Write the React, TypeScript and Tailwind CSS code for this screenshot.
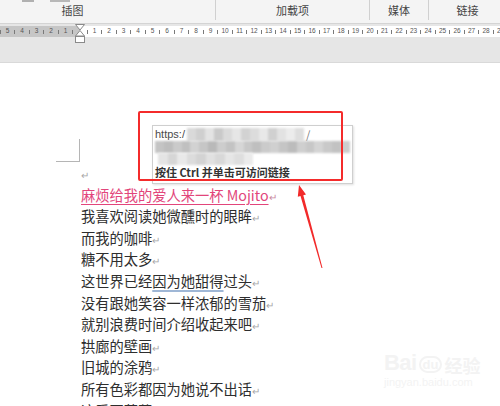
import React from 'react';

const cjk = "font-['Noto_Sans_CJK_SC','Noto_Sans',sans-serif]";

const lines = [
  '我喜欢阅读她微醺时的眼眸',
  '而我的咖啡',
  '糖不用太多',
  'UNDERLINE',
  '没有跟她笑容一样浓郁的雪茄',
  '就别浪费时间介绍收起来吧',
  '拱廊的壁画',
  '旧城的涂鸦',
  '所有色彩都因为她说不出话',
  '这爱不落幕',
];

// ruler cells: k = -11 .. 58, centred at 80 + 7.25k
const ruler = Array.from({ length: 70 }, (_, i) => i - 11);

const mosaic1 = ['#d9d9d9', '#cfcfcf', '#e3e3e3', '#c9c9c9', '#dadada', '#e6e6e6', '#d2d2d2', '#dcdcdc', '#e8e8e8', '#d0d0d0', '#e2e2e2', '#ececec', '#dedede'];
const mosaic2 = ['#c4c4c4', '#bdbdbd', '#cacaca', '#c0c0c0', '#d2d2d2', '#c6c6c6', '#b9b9b9', '#cdcdcd', '#c3c3c3', '#d6d6d6', '#c8c8c8', '#bfbfbf', '#cbcbcb', '#d0d0d0', '#c5c5c5', '#bcbcbc', '#cfcfcf', '#c7c7c7', '#d4d4d4', '#c9c9c9', '#c2c2c2', '#cccccc'];
const mosaic3 = ['#e4e4e4', '#d6d6d6', '#e9e9e9', '#dcdcdc', '#d3d3d3', '#e1e1e1', '#d8d8d8', '#e6e6e6', '#dedede', '#ebebeb'];

function Ret({ pink }: { pink?: boolean }) {
  return <span className={`text-[10px] leading-none ${pink ? 'text-[#c98a9e]' : 'text-[#a8a8a8]'}`}>↵</span>;
}

export default function App() {
  return (
    <div className={`relative w-[500px] h-[406px] overflow-hidden bg-white ${cjk}`}>
      {/* Ribbon */}
      <div className="relative h-[24px] bg-[#f4f4f4] border-b border-[#d4d4d4] overflow-hidden">
        <div className="flex gap-[16px] pl-[22px] h-[3px]">
          <div className="w-[12px] h-[2px] bg-[#b0b0b0]" />
          <div className="w-[20px] h-[2px] bg-[#b8b8b8]" />
        </div>
        <div className="flex ml-[-70px] h-[20px] mt-[-3px]">
          <div className="w-[285px] shrink-0 flex items-end justify-center text-[11px] text-[#444] leading-none pb-[4px]">插图</div>
          <div className="w-px bg-[#d0d0d0] shrink-0" />
          <div className="w-[153px] shrink-0 flex items-end justify-center text-[11px] text-[#444] leading-none pb-[4px]">加载项</div>
          <div className="w-px bg-[#d0d0d0] shrink-0" />
          <div className="w-[58px] shrink-0 flex items-end justify-center text-[11px] text-[#444] leading-none pb-[4px]">媒体</div>
          <div className="w-px bg-[#d0d0d0] shrink-0" />
          <div className="w-[77px] shrink-0 flex items-end justify-center text-[11px] text-[#444] leading-none pb-[4px]">链接</div>
        </div>
      </div>

      {/* Ruler area */}
      <div className="bg-[#e6e6e6] pt-[2px] h-[39px] border-b border-[#d9d9d9]">
        <div className="h-[11px] bg-[linear-gradient(to_right,#c6c6c6_80px,#ffffff_80px)] overflow-hidden">
          <div className="flex ml-[-3.375px] h-full font-['Liberation_Sans',sans-serif]">
            {ruler.map((k) => (
              <div key={k} className="w-[7.25px] shrink-0 flex items-center justify-center">
                {k === 0 ? null : k % 2 !== 0 ? (
                  <div className="w-px h-[4px] bg-[#7a7a7a]" />
                ) : (
                  <span className="text-[6.5px] leading-none text-[#555]">{Math.abs(k) / 2}</span>
                )}
              </div>
            ))}
          </div>
        </div>
      </div>

      {/* indent marker */}
      <svg className="absolute left-[74px] top-[24px]" width="12" height="22" viewBox="0 0 12 22">
        <path d="M1.5 0.5 H10.5 L6 6 Z" fill="#fff" stroke="#8a8a8a" />
        <path d="M6 6.5 L10.5 12 H1.5 Z" fill="#fff" stroke="#8a8a8a" />
        <rect x="1.5" y="12.5" width="9" height="6" fill="#fff" stroke="#8a8a8a" />
      </svg>

      {/* Document */}
      <div className="pl-[56px]">
        <div className="mt-[76px] w-[24px] h-[23px] border-r border-b border-[#b5b5b5]" />
      </div>
      <div className="pl-[81px] text-[14.25px] leading-[21.6px] text-[#2e2e2e] whitespace-nowrap">
        <div className="h-[21.6px]">
          <Ret />
        </div>
        <div className="h-[21.6px]">
          <span className="text-[#e2457b] underline decoration-[#e2457b] underline-offset-[3px]">麻烦给我的爱人来一杯 Mojito</span>
          <Ret pink />
        </div>
        {lines.map((l, i) =>
          l === 'UNDERLINE' ? (
            <div key={i} className="h-[21.6px]">
              这世界已经
              <span className="underline decoration-[#9fb7d6] decoration-[1.5px] underline-offset-[3px]">因为她甜得</span>
              过头
              <Ret />
            </div>
          ) : (
            <div key={i} className="h-[21.6px]">
              {l}
              <Ret />
            </div>
          )
        )}
      </div>

      {/* Hyperlink tooltip */}
      <div className="absolute left-[152px] top-[125px] w-[201px] h-[59px] bg-white border border-[#cfcfcf] shadow-[1px_1px_2px_rgba(0,0,0,0.12)] px-[2px] pt-[1px]">
        <div className="flex items-center h-[14px]">
          <span className="text-[11px] text-[#4a4a4a] leading-none font-['Liberation_Sans',sans-serif]">https:/</span>
          <div className="flex ml-[2px] blur-[1.2px]">
            {mosaic1.map((c, i) => (
              <div key={i} className="w-[9px] h-[13px]" style={{ background: c }} />
            ))}
          </div>
          <span className="text-[11px] text-[#777] leading-none ml-[2px]">/</span>
        </div>
        <div className="flex h-[12px] blur-[1.2px]">
          {mosaic2.map((c, i) => (
            <div key={i} className="w-[9px] h-full" style={{ background: c }} />
          ))}
        </div>
        <div className="flex h-[12px] ml-[3px] blur-[1.2px]">
          {mosaic3.map((c, i) => (
            <div key={i} className="w-[9.5px] h-full" style={{ background: c }} />
          ))}
        </div>
        <div className="text-[11px] font-bold text-[#333] leading-[15px] whitespace-nowrap">按住 Ctrl 并单击可访问链接</div>
      </div>

      {/* Red highlight box */}
      <div className="absolute left-[138px] top-[111px] w-[205px] h-[70px] border-2 border-[#f42b2b] rounded-[2px]" />

      {/* Red arrow */}
      <svg className="absolute left-[290px] top-[180px]" width="40" height="95" viewBox="0 0 40 95">
        <polygon
          points="9,5 16,14.5 13.3,15.2 32.5,87.9 31.5,88.1 10.5,16 7.8,16.7"
          fill="#f22a2a"
        />
      </svg>

      {/* Watermark */}
      <div className="absolute left-[384px] top-[352px] flex flex-col items-start text-[#f3f3f3] font-['Liberation_Sans',sans-serif] select-none">
        <div className="flex items-end gap-[2px] leading-none">
          <span className="text-[22px] font-bold tracking-tight">Bai</span>
          <span className="text-[13px] font-bold border-2 border-[#f3f3f3] rounded-full px-[2px] mb-[1px]">du</span>
          <span className={`text-[18px] font-bold ${cjk}`}>经验</span>
        </div>
        <span className="text-[11px] mt-[3px] leading-none">jingyan.baidu.com</span>
      </div>
    </div>
  );
}
